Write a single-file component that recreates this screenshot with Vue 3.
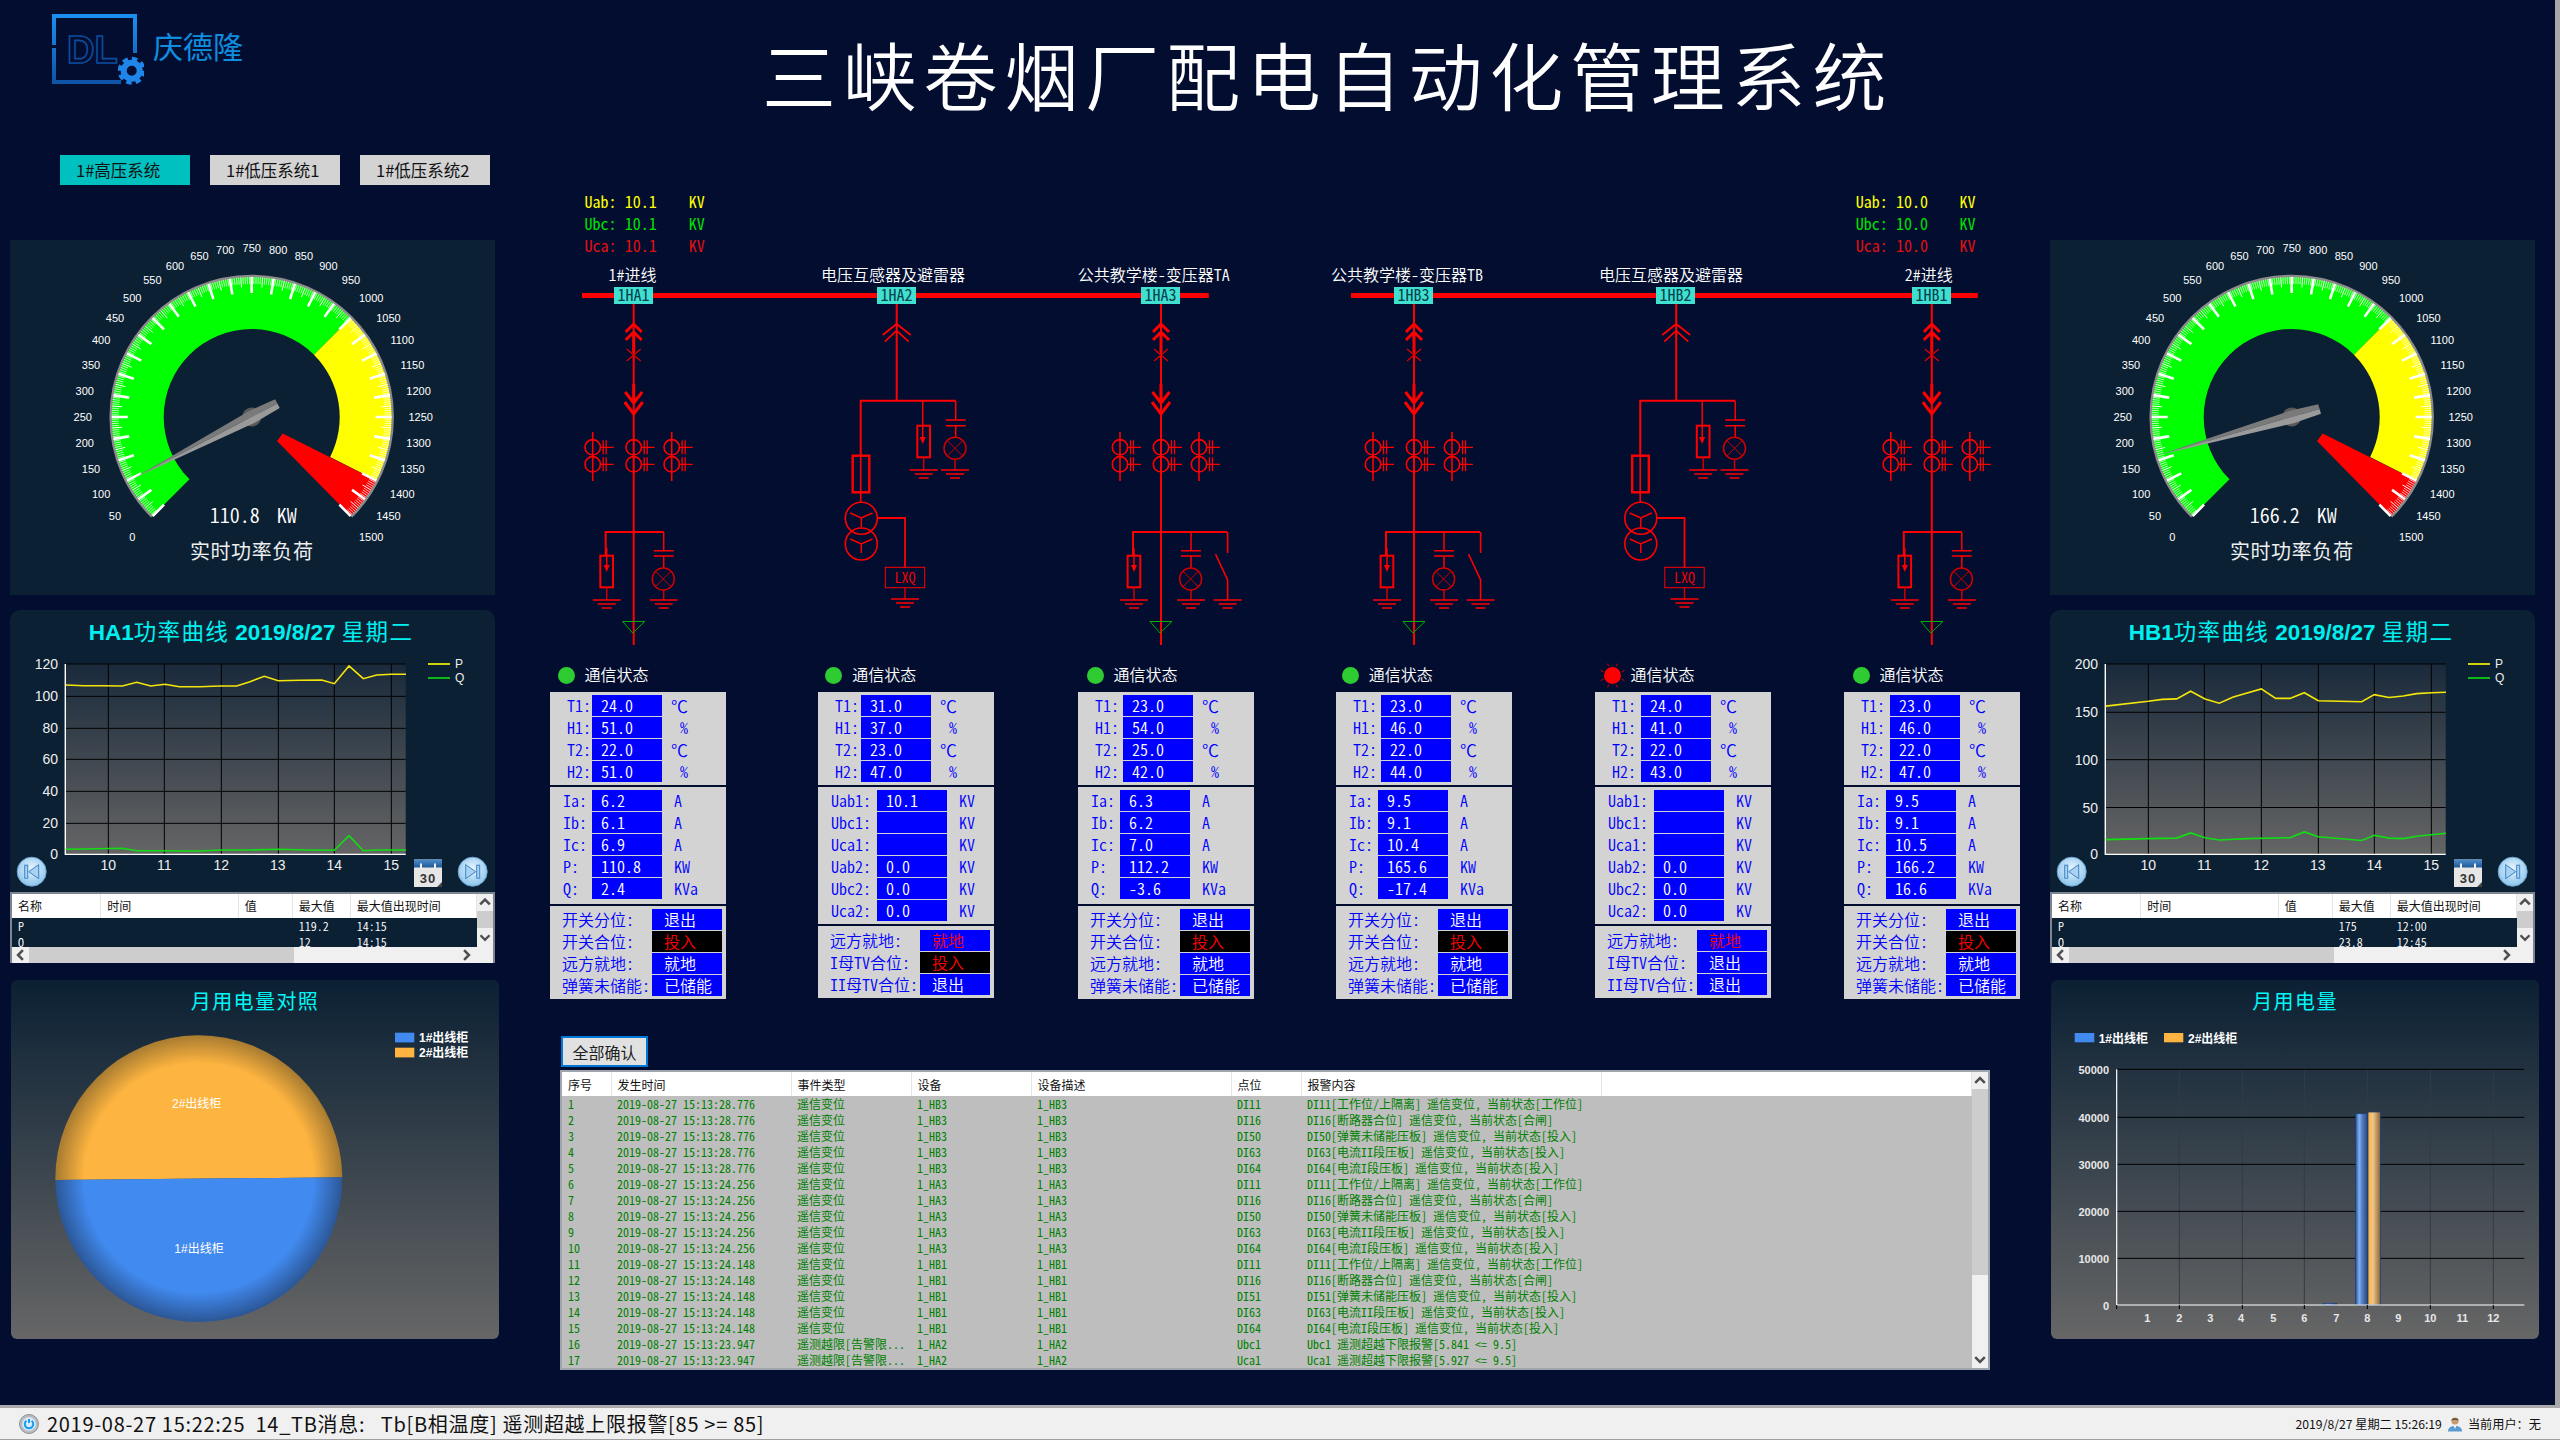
<script setup>
const rad = d => (d * Math.PI) / 180
const pol = (r, a) => [+(r * Math.sin(rad(a))).toFixed(2), +(-r * Math.cos(rad(a))).toFixed(2)]
const ang = v => -135 + (v / 1500) * 270
const band = (ri, ro, a0, a1) => {
  const [x0, y0] = pol(ro, a0), [x1, y1] = pol(ro, a1), [x2, y2] = pol(ri, a1), [x3, y3] = pol(ri, a0)
  return `M${x0} ${y0}A${ro} ${ro} 0 0 1 ${x1} ${y1}L${x2} ${y2}A${ri} ${ri} 0 0 0 ${x3} ${y3}Z`
}
const green = band(88, 141, -135, 45)
const yellow = band(88, 141, 45, 117)
const [rx0, ry0] = pol(141, 117), [rx1, ry1] = pol(141, 135)
const red = `M31 16.6L${rx0} ${ry0}A141 141 0 0 1 ${rx1} ${ry1}L25.3 24Z`
const rim = (() => { const [a, b] = pol(141, -135), [c, d] = pol(141, 135); return `M${a} ${b}A141 141 0 1 1 ${c} ${d}` })()
const tick = (step, skip, len) => {
  let d = ''
  for (let v = 0; v <= 1500; v += step) {
    if (skip && v % skip === 0) continue
    const [a, b] = pol(140, ang(v)), [c, e] = pol(140 - len, ang(v))
    d += `M${a} ${b}L${c} ${e}`
  }
  return d
}
const ticksMinor = tick(5, 25, 7)
const ticksMid = tick(25, 50, 10)
const ticksMajor = tick(50, 0, 16)
const gaugeLabels = Array.from({ length: 31 }, (_, i) => {
  const v = i * 50
  const [x, y] = pol(169, ang(v))
  return { v, x, y: y + 4 }
})
const needle = ([tx, ty]) => {
  const l = Math.hypot(tx, ty), ux = tx / l, uy = ty / l, nx = -uy, ny = ux
  const p = (along, off) => `${(ux * along + nx * off).toFixed(1)},${(uy * along + ny * off).toFixed(1)}`
  return {
    a: [p(l, 0), p(0, 6.5), p(-29, 5), p(-29, 0)].join(' '),
    b: [p(l, 0), p(0, -6.5), p(-29, -5), p(-29, 0)].join(' ')
  }
}
const line = (arr, fx, fy) => arr.map(([x, y]) => `${(fx(x)).toFixed(1)},${(fy(y)).toFixed(1)}`).join(' ')
const fx = z => z / 3 - 10
const yA = z => z / 3 - 52
const yB = z => z / 2.09 - 422
const vLines = [325, 493, 664, 835, 1003, 1174]
const sides = [
  {
    id: 'a', title: 'HA1', value: '110.8',
    n: needle([-118.4, 61.4]),
    grid: [192, 289, 385, 478, 574, 670].map(yA), base: yA(763),
    yl: [['120', 192], ['100', 289], ['80', 385], ['60', 478], ['40', 574], ['20', 670], ['0', 763]].map(([t, z]) => ({ t, y: yA(z) })),
    p: line([[197,255],[253,257],[310,257],[367,258],[410,247],[452,258],[495,253],[538,260],[600,260],[660,258],[710,258],[750,245],[793,229],[835,242],[900,241],[965,240],[1003,251],[1047,198],[1090,236],[1130,225],[1175,223],[1218,223]], fx, yA),
    q: line([[197,748],[253,747],[367,745],[410,752],[495,752],[540,753],[600,753],[665,750],[750,750],[835,748],[920,750],[1003,751],[1047,707],[1090,752],[1130,750],[1218,750]], fx, yA),
    rows: [['P', '119.2', '14:15'], ['Q', '12', '14:15']]
  },
  {
    id: 'b', title: 'HB1', value: '166.2',
    n: needle([-133.4, 38.3]),
    grid: [907, 1008, 1107, 1207].map(yB), base: yB(1305),
    yl: [['200', 907], ['150', 1008], ['100', 1107], ['50', 1207], ['0', 1305]].map(([t, z]) => ({ t, y: yB(z) })),
    p: line([[197,995],[325,985],[367,981],[410,980],[452,964],[495,980],[538,989],[580,976],[664,959],[707,979],[750,979],[793,967],[835,984],[900,985],[965,986],[1003,971],[1047,977],[1090,974],[1130,969],[1175,967],[1218,966]], fx, yB),
    q: line([[197,1274],[325,1272],[410,1271],[452,1260],[495,1270],[538,1275],[620,1272],[750,1270],[793,1258],[835,1268],[965,1276],[1003,1265],[1047,1271],[1090,1272],[1130,1267],[1218,1261]], fx, yB),
    rows: [['P', '175', '12:00'], ['Q', '23.8', '12:45']]
  }
]
const xTicks = [['10', 325], ['11', 493], ['12', 664], ['13', 833], ['14', 1003], ['15', 1174]].map(([t, z]) => ({ t, x: fx(z) }))
const gridV = vLines.map(fx)

const bx = z => z / 3 - 11
const by = z => z / 3 - 42
const barY = [['50000', 268], ['40000', 412], ['30000', 553], ['20000', 694], ['10000', 835]].map(([t, z]) => ({ t, y: by(z) }))
const barX = [322, 418, 511, 603, 700, 793, 889, 982, 1075, 1171, 1267, 1360].map((z, i) => ({ t: i + 1, x: bx(z) }))
const barV = [418, 607, 793, 982, 1171, 1360].map(bx)
const barTicks = [230, 418, 607, 793, 982, 1171, 1360].map(bx)
const bars = [
  { x: bx(850), w: 40 / 3, y: by(970), h: 5 / 3, f: 'blue' },
  { x: bx(947), w: 35 / 3, y: by(401), h: 574 / 3, f: 'blue' },
  { x: bx(984), w: 37 / 3, y: by(396), h: 579 / 3, f: 'orange' }
]

const gnd = (x, y) => `M${x - 14} ${y}H${x + 14}M${x - 9} ${y + 4}H${x + 9}M${x - 5} ${y + 8}H${x + 5}`
const ct = x => {
  let d = ''
  for (const y of [447.3, 464.3]) d += `M${x + 10.5} ${y - 7}V${y + 7}M${x + 13.5} ${y - 7}V${y + 7}M${x + 8} ${y}H${x + 21}`
  return d
}
const ctCols = [-41, 0, 38]
const feeders = [{ x: 633.7 }, { x: 1161, sw: true }, { x: 1414, sw: true }, { x: 1931.8 }]
const vts = [896.7, 1676.2]
const buses = [[582, 1208.8], [1351, 1977.8]]
const tags = [['1HA1', 614], ['1HA2', 877], ['1HA3', 1141], ['1HB3', 1394], ['1HB2', 1656], ['1HB1', 1912]]
const busLabels = [['1#进线', 632.4], ['电压互感器及避雷器', 893], ['公共教学楼-变压器TA', 1153.8], ['公共教学楼-变压器TB', 1407], ['电压互感器及避雷器', 1671], ['2#进线', 1928.8]]
const volts = [
  { x: [584.6, 624.8, 688.7], v: '10.1' },
  { x: [1855.8, 1896, 1959.4], v: '10.0' }
]
const voltRows = [['Uab:', '#ffff00', 207.5], ['Ubc:', '#00e000', 229.5], ['Uca:', '#e01010', 251.5]]

const mk = (m, t, io, bits) => ({ ...m, t, io, bits })
const envLabels = ['T1:', 'H1:', 'T2:', 'H2:']
const envUnits = ['℃', '%', '℃', '%']
const feederIo = v => ['Ia:', 'Ib:', 'Ic:', 'P:', 'Q:'].map((l, i) => ({ l, v: v[i], u: ['A', 'A', 'A', 'KW', 'KVa'][i] }))
const vtIo = v => ['Uab1:', 'Ubc1:', 'Uca1:', 'Uab2:', 'Ubc2:', 'Uca2:'].map((l, i) => ({ l, v: v[i], u: 'KV' }))
const bitsF = [
  { l: '开关分位:', v: '退出' }, { l: '开关合位:', v: '投入', k: 'black' },
  { l: '远方就地:', v: '就地' }, { l: '弹簧未储能:', v: '已储能' }
]
const bitsV = mid => [
  { l: '远方就地:', v: '就地', k: 'redtxt' },
  mid ? { l: 'I母TV合位:', v: '投入', k: 'black' } : { l: 'I母TV合位:', v: '退出' },
  { l: 'II母TV合位:', v: '退出' }
]
const cards = [
  mk({ ml: 0, dot: 7.5, b1: 42, b2: 42, b3: 102 }, ['24.0', '51.0', '22.0', '51.0'], feederIo(['6.2', '6.1', '6.9', '110.8', '2.4']), bitsF),
  mk({ ml: 92, dot: 7.2, b1: 43, b2: 59, b3: 102, vt: true }, ['31.0', '37.0', '23.0', '47.0'], vtIo(['10.1', '', '', '0.0', '0.0', '0.0']), bitsV(true)),
  mk({ ml: 84, dot: 8.5, b1: 45, b2: 42, b3: 102 }, ['23.0', '54.0', '25.0', '42.0'], feederIo(['6.3', '6.2', '7.0', '112.2', '-3.6']), bitsF),
  mk({ ml: 82, dot: 5.7, b1: 45, b2: 42, b3: 102 }, ['23.0', '46.0', '22.0', '44.0'], feederIo(['9.5', '9.1', '10.4', '165.6', '-17.4']), bitsF),
  mk({ ml: 83, dot: 8.5, b1: 46, b2: 59, b3: 102, vt: true, alarm: true }, ['24.0', '41.0', '22.0', '43.0'], vtIo(['', '', '', '0.0', '0.0', '0.0']), bitsV(false)),
  mk({ ml: 73, dot: 8.5, b1: 46, b2: 42, b3: 102 }, ['23.0', '46.0', '22.0', '47.0'], feederIo(['9.5', '9.1', '10.5', '166.2', '16.6']), bitsF)
]
const rays = Array.from({ length: 8 }, (_, i) => {
  const a = pol(10.5, i * 45 + 22.5), b = pol(13.5, i * 45 + 22.5)
  return `M${a[0]} ${a[1]}L${b[0]} ${b[1]}`
}).join('')

const msg = {
  DI11: 'DI11[工作位/上隔离] 遥信变位， 当前状态[工作位]',
  DI16: 'DI16[断路器合位] 遥信变位， 当前状态[合闸]',
  DI50: 'DI50[弹簧未储能压板] 遥信变位， 当前状态[投入]',
  DI51: 'DI51[弹簧未储能压板] 遥信变位， 当前状态[投入]',
  DI63: 'DI63[电流II段压板] 遥信变位， 当前状态[投入]',
  DI64: 'DI64[电流I段压板] 遥信变位， 当前状态[投入]'
}
const alarms = []
for (const [dev, time, pts] of [
  ['1_HB3', '15:13:28.776', ['DI11', 'DI16', 'DI50', 'DI63', 'DI64']],
  ['1_HA3', '15:13:24.256', ['DI11', 'DI16', 'DI50', 'DI63', 'DI64']],
  ['1_HB1', '15:13:24.148', ['DI11', 'DI16', 'DI51', 'DI63', 'DI64']]
]) for (const p of pts) alarms.push({ time: '2019-08-27 ' + time, type: '遥信变位', dev, p, m: msg[p] })
alarms.push({ time: '2019-08-27 15:13:23.947', type: '遥测越限[告警限...', dev: '1_HA2', p: 'Ubc1', m: 'Ubc1 遥测超越下限报警[5.841 <= 9.5]' })
alarms.push({ time: '2019-08-27 15:13:23.947', type: '遥测越限[告警限...', dev: '1_HA2', p: 'Uca1', m: 'Uca1 遥测超越下限报警[5.927 <= 9.5]' })
const alarmCols = ['序号', '发生时间', '事件类型', '设备', '设备描述', '点位', '报警内容', '']
</script>

<template>
  <div class="screen">
    <div class="top">
      <header class="head">
        <div class="logo">
          <svg width="92" height="72" viewBox="0 0 92 72">
            <defs>
              <linearGradient id="lg" x1="0" y1="0" x2="0" y2="1"><stop offset="0" stop-color="#1a8df0" /><stop offset="1" stop-color="#0e55a8" /></linearGradient>
            </defs>
            <path d="M2 31V2H83V39M2 34V68H69" fill="none" stroke="url(#lg)" stroke-width="4" />
            <text x="15" y="49" class="logo-dl">DL</text>
            <circle cx="79.7" cy="56.8" r="8" fill="none" stroke="#1f85e8" stroke-width="6" />
            <circle cx="79.7" cy="56.8" r="12" fill="none" stroke="#1f85e8" stroke-width="4" stroke-dasharray="5.4 4" />
          </svg>
          <span class="logo-name">庆德隆</span>
        </div>
        <h1 class="title">三峡卷烟厂配电自动化管理系统</h1>
      </header>

      <main class="body">
        <section v-for="s in sides" :key="s.id" class="side" :class="'side-' + s.id">
          <nav class="tabs">
            <template v-if="s.id === 'a'">
              <button class="tab on">1#高压系统</button>
              <button class="tab">1#低压系统1</button>
              <button class="tab">1#低压系统2</button>
            </template>
          </nav>

          <div class="gauge-panel">
            <svg width="485" height="355" viewBox="-241.7 -177 485 355">
              <path :d="green" fill="#00ff00" />
              <path :d="yellow" fill="#ffff00" />
              <path :d="red" fill="#ff0000" />
              <path :d="rim" fill="none" stroke="#8a8a8a" stroke-width="2.5" />
              <path :d="ticksMinor" stroke="#fff" stroke-width=".7" />
              <path :d="ticksMid" stroke="#fff" stroke-width="1" />
              <path :d="ticksMajor" stroke="#fff" stroke-width="2.6" />
              <circle cx="0" cy="0" r="9.5" fill="#5a5a5a" />
              <polygon :points="s.n.a" fill="#7a7a7a" />
              <polygon :points="s.n.b" fill="#9a9a9a" />
              <text v-for="l in gaugeLabels" :key="l.v" :x="l.x" :y="l.y" class="g-label">{{ l.v }}</text>
              <text x="-42" y="106" class="g-val sim">{{ s.value }}</text>
              <text x="25" y="106" class="g-val sim">KW</text>
              <text x="0" y="142" class="g-name">实时功率负荷</text>
            </svg>
          </div>

          <div class="chart-panel">
            <h2 class="chart-title"><b>{{ s.title }}</b>功率曲线 <b>2019/8/27</b> 星期二</h2>
            <svg width="485" height="240" viewBox="0 0 485 240" class="chart">
              <defs>
                <linearGradient :id="'plot' + s.id" x1="0" y1="0" x2="0" y2="1"><stop offset="0" stop-color="#1a2a3b" /><stop offset="1" stop-color="#656565" /></linearGradient>
                <radialGradient :id="'btn' + s.id" cx=".5" cy=".4" r=".6"><stop offset="0" stop-color="#e8f5fe" /><stop offset="1" stop-color="#8cc4ec" /></radialGradient>
                <linearGradient :id="'cal' + s.id" x1="0" y1="0" x2="0" y2="1"><stop offset="0" stop-color="#4d8cc8" /><stop offset="1" stop-color="#205a9a" /></linearGradient>
              </defs>
              <rect x="55.3" y="12" width="340.4" :height="s.base - 12" :fill="`url(#plot${s.id})`" />
              <path v-for="y in s.grid" :key="y" :d="`M55.3 ${y}H395.7`" stroke="#000" stroke-width="1" />
              <path v-for="x in gridV" :key="x" :d="`M${x} 12V${s.base}`" stroke="#000" stroke-width="1" />
              <path :d="`M55.3 12V${s.base}H395.7`" fill="none" stroke="#fff" stroke-width="1.4" />
              <polyline :points="s.p" fill="none" stroke="#f5e60a" stroke-width="1.6" />
              <polyline :points="s.q" fill="none" stroke="#10e010" stroke-width="1.6" />
              <text v-for="l in s.yl" :key="l.t" x="48" :y="l.y + 5" class="ax ax-y">{{ l.t }}</text>
              <text v-for="l in xTicks" :key="l.t" :x="l.x" y="218" class="ax ax-x">{{ l.t }}</text>
              <path d="M418 12H440" stroke="#ffff00" stroke-width="1.6" />
              <path d="M418 26H440" stroke="#10e010" stroke-width="1.6" />
              <text x="445" y="16" class="lg">P</text>
              <text x="445" y="30" class="lg">Q</text>
              <g transform="translate(21.7 219.7)">
                <circle r="14.5" :fill="`url(#btn${s.id})`" stroke="#6aa6d0" stroke-width="1" />
                <rect x="-7" y="-6.5" width="3" height="13" fill="#a9d2f2" stroke="#3f86c6" stroke-width="1" />
                <path d="M7 -7V7L-3 0Z" fill="#a9d2f2" stroke="#3f86c6" stroke-width="1" />
              </g>
              <g transform="translate(462.7 219.7)">
                <circle r="14.5" :fill="`url(#btn${s.id})`" stroke="#6aa6d0" stroke-width="1" />
                <rect x="4" y="-6.5" width="3" height="13" fill="#a9d2f2" stroke="#3f86c6" stroke-width="1" />
                <path d="M-7 -7V7L3 0Z" fill="#a9d2f2" stroke="#3f86c6" stroke-width="1" />
              </g>
              <g transform="translate(404 207.5)">
                <rect width="28" height="27.5" fill="#e6e6e6" />
                <rect width="28" height="8" :fill="`url(#cal${s.id})`" />
                <rect x="6" y="4" width="2" height="5" fill="#eee" />
                <rect x="20" y="4" width="2" height="5" fill="#eee" />
                <text x="14" y="23" class="cal">30</text>
                <path d="M23 27.5L28 22.5V27.5Z" fill="#444" />
              </g>
            </svg>
            <div class="mini">
              <div class="mini-main">
                <div class="mini-view">
                  <div class="mini-head">
                    <span>名称</span><span>时间</span><span>值</span><span>最大值</span><span>最大值出现时间</span>
                  </div>
                  <div class="mini-body sim">
                    <div v-for="r in s.rows" :key="r[0]" class="mini-row">
                      <span>{{ r[0] }}</span><span></span><span></span><span>{{ r[1] }}</span><span>{{ r[2] }}</span>
                    </div>
                  </div>
                </div>
                <div class="vbar">
                  <svg class="chev" viewBox="0 0 10 10"><path d="M2 6.5L5 3.5L8 6.5" /></svg>
                  <i class="vthumb"></i>
                  <svg class="chev down" viewBox="0 0 10 10"><path d="M2 6.5L5 3.5L8 6.5" /></svg>
                </div>
              </div>
              <div class="hbar">
                <svg class="chev left" viewBox="0 0 10 10"><path d="M2 6.5L5 3.5L8 6.5" /></svg>
                <i class="hthumb"></i>
                <svg class="chev right" viewBox="0 0 10 10"><path d="M2 6.5L5 3.5L8 6.5" /></svg>
              </div>
            </div>
          </div>

          <div v-if="s.id === 'a'" class="low-panel">
            <h2 class="low-title">月用电量对照</h2>
            <svg width="488" height="317" viewBox="0 0 488 317">
              <defs>
                <radialGradient id="pieO" gradientUnits="userSpaceOnUse" cx="187.8" cy="156" r="143.5"><stop offset=".8" stop-color="#fdb440" /><stop offset="1" stop-color="#a67a30" /></radialGradient>
                <radialGradient id="pieB" gradientUnits="userSpaceOnUse" cx="187.8" cy="156" r="143.5"><stop offset=".8" stop-color="#418aef" /><stop offset="1" stop-color="#2c5797" /></radialGradient>
              </defs>
              <path d="M44.3 158A143.5 143.5 0 0 1 331.3 155.3Z" fill="url(#pieO)" />
              <path d="M331.3 155.3A143.5 143.5 0 0 1 44.3 158Z" fill="url(#pieB)" />
              <text x="185.7" y="86" class="pie-t">2#出线柜</text>
              <text x="188" y="230.5" class="pie-t">1#出线柜</text>
              <rect x="384" y="10.7" width="19.3" height="9.7" fill="#418aef" />
              <rect x="384" y="25.7" width="19.3" height="9.7" fill="#fdb440" />
              <text x="408" y="20" class="pie-lg">1#出线柜</text>
              <text x="408" y="35" class="pie-lg">2#出线柜</text>
            </svg>
          </div>

          <div v-else class="low-panel">
            <h2 class="low-title">月用电量</h2>
            <svg width="488" height="317" viewBox="0 0 488 317">
              <defs>
                <linearGradient id="barB" x1="0" y1="0" x2="1" y2="0"><stop offset="0" stop-color="#2a5396" /><stop offset=".3" stop-color="#80b0f5" /><stop offset=".6" stop-color="#4e79bb" /><stop offset="1" stop-color="#2d4a7c" /></linearGradient>
                <linearGradient id="barO" x1="0" y1="0" x2="1" y2="0"><stop offset="0" stop-color="#fdb440" /><stop offset=".4" stop-color="#f3c486" /><stop offset="1" stop-color="#8a6a3c" /></linearGradient>
              </defs>
              <rect x="23.7" y="11" width="19.6" height="9.3" fill="#418aef" />
              <rect x="113" y="11" width="19.3" height="9.3" fill="#fdb440" />
              <text x="47.7" y="20.5" class="pie-lg">1#出线柜</text>
              <text x="137" y="20.5" class="pie-lg">2#出线柜</text>
              <path v-for="x in barV" :key="x" :d="`M${x} 47.3V283`" stroke="#333b45" stroke-width="1" />
              <path v-for="l in barY" :key="l.t" :d="`M65.7 ${l.y}H473.3`" stroke="#000" stroke-width="1" />
              <rect v-for="b in bars" :key="b.x" :x="b.x" :y="b.y" :width="b.w" :height="b.h" :fill="b.f === 'blue' ? 'url(#barB)' : 'url(#barO)'" stroke="#1f3f78" stroke-width=".8" />
              <path d="M65.7 47.3V283H473.3" fill="none" stroke="#fff" stroke-width="1.2" />
              <path v-for="x in barTicks" :key="x" :d="`M${x} 283v4`" stroke="#000" stroke-width="1" />
              <text v-for="l in barY" :key="l.t" x="58" :y="l.y + 5" class="bar-ax ax-y">{{ l.t }}</text>
              <text x="58" y="288" class="bar-ax ax-y">0</text>
              <text v-for="l in barX" :key="l.t" :x="l.x" y="300" class="bar-ax ax-x">{{ l.t }}</text>
            </svg>
          </div>
        </section>

        <section class="center">
          <svg class="diagram" width="1500" height="484" viewBox="540 180 1500 484">
            <g v-for="(g, gi) in volts" :key="gi">
              <g v-for="r in voltRows" :key="r[0]" :fill="r[1]" class="sim v-txt">
                <text :x="g.x[0]" :y="r[2]">{{ r[0] }}</text>
                <text :x="g.x[1]" :y="r[2]">{{ g.v }}</text>
                <text :x="g.x[2]" :y="r[2]">KV</text>
              </g>
            </g>
            <text v-for="l in busLabels" :key="l[1]" :x="l[1]" y="281" class="bus-l sim">{{ l[0] }}</text>
            <rect v-for="b in buses" :key="b[0]" :x="b[0]" y="293" :width="b[1] - b[0]" height="5" fill="#ff0000" />

            <g v-for="f in feeders" :key="f.x" :transform="`translate(${f.x} 0)`" fill="none" stroke="#ff0000">
              <path d="M0 304V645" stroke-width="2" />
              <path d="M-8 332L0 324L8 332M-8 340L0 332L8 340M0 332V352" stroke-width="3" />
              <path d="M-7 349L7 361M7 349L-7 361" stroke-width="1.3" stroke="#e00000" />
              <path d="M0 384V402M-8.5 392L0 403L8.5 392M-9 402L0 414L9 402" stroke-width="3" />
              <g v-for="c in ctCols" :key="c">
                <path v-if="c" :d="`M${c} 432V481`" stroke-width="1.6" />
                <circle :cx="c" cy="447.3" r="7.7" stroke-width="1.6" />
                <circle :cx="c" cy="464.3" r="7.7" stroke-width="1.6" />
                <path :d="ct(c)" stroke-width="1.3" />
              </g>
              <path :d="`M-28 556V532H${f.sw ? 66 : 30}`" stroke-width="2" />
              <rect x="-33.4" y="555.7" width="12.7" height="31.6" stroke-width="2" />
              <path d="M-27 548V568" stroke-width="1.5" />
              <path d="M-30 565L-27 572L-24 565Z" fill="#ff0000" stroke="none" />
              <path d="M-27 587V600" stroke-width="1.5" stroke="#d00000" />
              <path :d="gnd(-27, 600)" stroke-width="1.6" />
              <path d="M30 532V550.7M20 550.7H40M20 556H40M30 556V568" stroke-width="1.5" />
              <circle cx="29.6" cy="579" r="11" stroke-width="1.5" stroke="#d00000" />
              <path d="M21.8 571.2L37.4 586.8M37.4 571.2L21.8 586.8" stroke-width="1" stroke="#d00000" />
              <path d="M30 590V600" stroke-width="1.5" stroke="#d00000" />
              <path :d="gnd(30, 600)" stroke-width="1.6" />
              <g v-if="f.sw">
                <path d="M66.6 532V553M54.5 554L66.6 580V600" stroke-width="1.6" />
                <path :d="gnd(66.6, 600)" stroke-width="1.6" />
              </g>
              <path d="M-11 621.5H11L-1 633Z" stroke="#00b000" stroke-width="1" />
            </g>

            <g v-for="x0 in vts" :key="x0" :transform="`translate(${x0} 0)`" fill="none" stroke="#ff0000">
              <path d="M0 304V400.7" stroke-width="2" />
              <path d="M-14 335L0 324L14 335M-12 341.7L0 330.7L12 341.7" stroke-width="1.8" />
              <path d="M-36 456V400.7H59" stroke-width="2" />
              <rect x="-44" y="455.7" width="16.6" height="36.6" stroke-width="2.4" />
              <path d="M-36 456V503" stroke-width="1.6" />
              <circle cx="-35.4" cy="518.3" r="16" stroke-width="1.6" />
              <circle cx="-35.4" cy="544" r="16" stroke-width="1.6" />
              <path d="M-46.5 513L-35.4 518L-24.3 513M-35.4 518V527M-46.5 539L-35.4 544L-24.3 539M-35.4 544V553" stroke-width="1.5" />
              <path d="M-19 518H8.3V567.3" stroke-width="1.8" />
              <rect x="-11.4" y="567.3" width="39.4" height="20.4" stroke-width="1" />
              <text x="8.3" y="583" class="lxq sim">LXQ</text>
              <path d="M8.3 587.7V599" stroke-width="1.5" stroke="#d00000" />
              <path :d="gnd(8.3, 599)" stroke-width="1.6" />
              <path d="M26 400.7V439" stroke-width="1.5" />
              <path d="M23 437L26 444L29 437Z" fill="#ff0000" stroke="none" />
              <rect x="20.6" y="425.7" width="12.7" height="31.6" stroke-width="2" />
              <path d="M27 457V470" stroke-width="1.5" stroke="#d00000" />
              <path :d="gnd(27, 470)" stroke-width="1.6" />
              <path d="M59 400.7V420M49 420H69M49 425.7H69M59 425.7V437" stroke-width="1.5" />
              <circle cx="58.3" cy="448.3" r="11" stroke-width="1.5" stroke="#d00000" />
              <path d="M50.5 440.5L66.1 456.1M66.1 440.5L50.5 456.1" stroke-width="1" stroke="#d00000" />
              <path d="M58.3 459.3V470" stroke-width="1.5" stroke="#d00000" />
              <path :d="gnd(58.3, 470)" stroke-width="1.6" />
            </g>

            <g v-for="t in tags" :key="t[0]">
              <rect :x="t[1]" y="287" width="39" height="17" fill="#40e0d0" />
              <text :x="t[1] + 19.5" y="301" class="tag sim">{{ t[0] }}</text>
            </g>
          </svg>

          <div class="cards sim">
            <article v-for="c in cards" :key="c.ml" class="card" :style="{ marginLeft: c.ml + 'px' }">
              <div class="status">
                <span class="dot-wrap" :style="{ marginLeft: c.dot + 'px' }">
                  <svg v-if="c.alarm" class="dot-svg" width="17" height="17" viewBox="-8.5 -8.5 17 17">
                    <circle r="8.5" fill="#ff0000" />
                    <g transform="scale(.95)"><path :d="rays" stroke="#e00000" stroke-width="1" /></g>
                  </svg>
                  <i v-else class="dot"></i>
                </span>
                <span class="status-t">通信状态</span>
              </div>
              <div class="pane">
                <div class="rows p1" :style="{ gridTemplateColumns: c.b1 + 'px 70px 1fr' }">
                  <template v-for="(v, i) in c.t" :key="i">
                    <span class="lab">{{ envLabels[i] }}</span>
                    <span class="val">{{ v }}</span>
                    <span class="unit" :class="envUnits[i] === '%' ? 'pct' : 'deg'">{{ envUnits[i] }}</span>
                  </template>
                </div>
              </div>
              <div class="pane">
                <div class="rows p2" :class="{ six: c.vt }" :style="{ gridTemplateColumns: c.b2 + 'px 70px 1fr' }">
                  <template v-for="r in c.io" :key="r.l">
                    <span class="lab">{{ r.l }}</span>
                    <span class="val">{{ r.v }}</span>
                    <span class="unit u2">{{ r.u }}</span>
                  </template>
                </div>
              </div>
              <div class="pane">
                <div class="rows p3" :class="{ three: c.vt }" :style="{ gridTemplateColumns: c.b3 + 'px 70px' }">
                  <template v-for="r in c.bits" :key="r.l">
                    <span class="lab">{{ r.l }}</span>
                    <span class="val v3" :class="r.k">{{ r.v }}</span>
                  </template>
                </div>
              </div>
            </article>
          </div>

          <button class="confirm">全部确认</button>

          <div class="alarm">
            <div class="alarm-view">
              <table class="alarm-table sim">
                <colgroup>
                  <col style="width:49px" /><col style="width:180px" /><col style="width:120px" /><col style="width:120px" /><col style="width:200px" /><col style="width:70px" /><col style="width:300px" /><col />
                </colgroup>
                <thead>
                  <tr><th v-for="(h, i) in alarmCols" :key="i">{{ h }}</th></tr>
                </thead>
                <tbody>
                  <tr v-for="(a, i) in alarms" :key="i">
                    <td>{{ i + 1 }}</td><td>{{ a.time }}</td><td>{{ a.type }}</td><td>{{ a.dev }}</td><td>{{ a.dev }}</td><td>{{ a.p }}</td><td colspan="2">{{ a.m }}</td>
                  </tr>
                </tbody>
              </table>
            </div>
            <div class="alarm-bar">
              <svg class="chev" viewBox="0 0 10 10"><path d="M2 6.5L5 3.5L8 6.5" /></svg>
              <i class="alarm-thumb"></i>
              <svg class="chev down" viewBox="0 0 10 10"><path d="M2 6.5L5 3.5L8 6.5" /></svg>
            </div>
          </div>
        </section>
      </main>
    </div>

    <footer class="foot">
      <div class="foot-l">
        <svg width="20" height="20" viewBox="-10 -10 20 20">
          <circle r="9.5" fill="#b8bcc0" stroke="#8d9196" />
          <circle r="6.8" fill="#d6ecfa" />
          <path d="M-2.6 -3.2A4.2 4.2 0 1 0 2.6 -3.2" fill="none" stroke="#1a9cf0" stroke-width="2" />
          <path d="M0 -5V-1" stroke="#1a9cf0" stroke-width="2" />
        </svg>
        <span class="foot-msg">2019-08-27 15:22:25&nbsp; 14_TB消息:&nbsp;&nbsp; Tb[B相温度] 遥测超越上限报警[85 &gt;= 85]</span>
      </div>
      <div class="foot-r">
        <span>2019/8/27 星期二 15:26:19</span>
        <svg width="16" height="16" viewBox="0 0 16 16">
          <path d="M1 15.5C1 11.5 4 10 8 10S15 11.5 15 15.5Z" fill="#5b9ad0" />
          <circle cx="8" cy="5" r="3.6" fill="#c89a70" />
          <path d="M4.4 4.6C4.6 1.4 11.4 1.4 11.6 4.6C9.8 3.4 6.2 3.4 4.4 4.6Z" fill="#5a4434" />
          <path d="M6.8 10H9.2L8 13Z" fill="#fff" />
        </svg>
        <span>当前用户：无</span>
      </div>
    </footer>
  </div>
</template>

<style scoped>
.screen { width: 2560px; height: 1440px; display: flex; flex-direction: column; background: #020d30; overflow: hidden; font-family: "Noto Sans CJK SC", "Liberation Sans", sans-serif; color: #fff; }
.sim { font-family: "Noto Sans CJK SC", sans-serif; font-feature-settings: "hwid" 1; font-weight: 350; }
.top { flex: 1; min-height: 0; border-right: 5px solid #a8a8a8; }

.head { height: 155px; display: flex; }
.logo { width: 540px; box-sizing: border-box; padding: 14px 0 0 52px; display: flex; align-items: flex-start; gap: 9px; }
.logo-dl { font: 700 38px "Liberation Sans", sans-serif; fill: none; stroke: #0c4c9c; stroke-width: 1.6; }
.logo-name { font-size: 30px; line-height: 30px; margin-top: 16px; letter-spacing: 0; color: #0f8ee0; }
.title { margin: 0 0 0 222px; font-weight: 350; font-size: 74px; letter-spacing: 6.8px; line-height: 145px; height: 155px; white-space: nowrap; }

.body { display: grid; grid-template-columns: 540px 1500px 515px; }
.side { grid-row: 1; box-sizing: border-box; padding-left: 10px; }
.side-a { grid-column: 1; }
.side-b { grid-column: 3; }
.center { grid-column: 2; grid-row: 1; padding-top: 25px; }

.tabs { height: 30px; margin-bottom: 55px; margin-left: 50px; display: flex; gap: 20px; }
.tab { width: 130px; height: 30px; border: 0; padding: 0 0 0 16px; text-align: left; background: #d3d3d3; color: #111; font: 400 16.5px "Noto Sans CJK SC", sans-serif; }
.tab.on { background: #00c0c0; }

.gauge-panel { width: 485px; height: 355px; background: #0b2033; }
.gauge-panel svg { display: block; }
.g-label { font: 11px "Liberation Sans", sans-serif; fill: #fff; text-anchor: middle; }
.g-val { font-size: 20px; fill: #fff; }
.g-name { font-size: 20px; letter-spacing: .6px; fill: #eee; text-anchor: middle; }

.chart-panel { width: 485px; height: 353px; margin-top: 15px; background: #0b2033; border-radius: 10px 10px 0 0; display: flex; flex-direction: column; }
.chart-title { margin: 0; height: 42px; line-height: 40px; padding-right: 3px; text-align: center; font-size: 22.5px; letter-spacing: 1.3px; font-weight: 400; color: #00f0f0; white-space: nowrap; }
.chart-title b { font-family: "Liberation Sans", sans-serif; letter-spacing: 0; }
.chart { display: block; flex: none; }
.ax { font: 14px "Liberation Sans", sans-serif; fill: #eee; }
.ax-y { text-anchor: end; }
.ax-x { text-anchor: middle; }
.lg { font: 12px "Liberation Sans", sans-serif; fill: #eee; }
.cal { font: 700 13px "Liberation Sans", sans-serif; fill: #333; text-anchor: middle; letter-spacing: 1px; }

.mini { height: 71px; box-sizing: border-box; border: solid #7d8590; border-width: 2px 2px 0; display: flex; flex-direction: column; }
.mini-main { flex: 1; min-height: 0; display: flex; }
.mini-view { flex: 1; overflow: hidden; }
.mini-head, .mini-row { display: grid; grid-template-columns: 89.3px 137.4px 54px 58px 1fr; font-size: 12px; }
.mini-head { height: 24px; background: #fff; color: #111; line-height: 24px; }
.mini-head span { padding-left: 6px; border-right: 1px solid #e5e5e5; }
.mini-body { height: 29px; overflow: hidden; background: #0b2033; }
.mini-row { height: 16px; line-height: 16px; color: #fff; }
.mini-row span { padding-left: 6px; }
.vbar { width: 16px; background: #f0f0f0; display: flex; flex-direction: column; align-items: center; }
.vbar .chev { width: 16px; height: 16px; flex: none; }
.vthumb { width: 16px; height: 17px; background: #cdcdcd; margin-top: 1px; }
.vbar .chev.down { margin-top: 2px; height: 15px; }
.hbar { height: 16px; flex: none; background: #f0f0f0; display: flex; align-items: center; }
.hbar .chev { width: 17px; height: 16px; flex: none; }
.hthumb { width: 265px; height: 16px; background: #cdcdcd; }
.hbar .chev.right { margin-left: auto; margin-right: 18px; }
.chev path { fill: none; stroke: #505050; stroke-width: 1.6; }
.chev.down { transform: rotate(180deg); }
.chev.left { transform: rotate(-90deg); }
.chev.right { transform: rotate(90deg); }

.low-panel { width: 488px; height: 359px; margin: 17px 0 0 1px; border-radius: 6px; background: linear-gradient(#0b2033, #666); }
.low-panel svg { display: block; }
.low-title { margin: 0; height: 42px; line-height: 42px; text-align: center; font-size: 20px; letter-spacing: 1.4px; font-weight: 400; color: #00f8f8; }
.pie-t { font: 12px "Liberation Sans", "Noto Sans CJK SC", sans-serif; fill: #fff; text-anchor: middle; }
.pie-lg { font: 700 12px "Liberation Sans", "Noto Sans CJK SC", sans-serif; fill: #fff; }
.bar-ax { font: 700 11px "Liberation Sans", sans-serif; fill: #e8e8e8; }

.diagram { display: block; }
.v-txt { font-size: 16px; font-weight: 400; }
.bus-l { font-size: 16px; fill: #fff; text-anchor: middle; }
.tag { font-size: 16px; font-weight: 400; fill: #06404c; stroke: none; text-anchor: middle; }
.lxq { font-size: 14px; fill: #ff0000; stroke: none; text-anchor: middle; }

.cards { display: flex; align-items: flex-start; padding-left: 10px; height: 335px; }
.card { width: 176px; flex: none; display: flex; flex-direction: column; gap: 2px; }
.status { height: 22px; margin-bottom: 4px; display: flex; align-items: center; gap: 10px; }
.dot-wrap { width: 17px; height: 17px; flex: none; }
.dot { display: block; width: 17px; height: 17px; border-radius: 50%; background: #2ecc32; }
.dot-svg { display: block; overflow: visible; }
.status-t { font-size: 16px; color: #fff; margin-top: -2px; }
.pane { background: #d3d3d3; }
.rows { display: grid; row-gap: 1px; grid-auto-rows: 21px; padding: 3px 0; font-size: 16px; line-height: 21px; color: #0000ff; }
.rows.p2 { padding-bottom: 5px; }
.rows.p2.six { padding-bottom: 3px; }
.rows.p3.three { padding-top: 4px; }
.lab { white-space: nowrap; }
.p1 .lab { padding-left: 17px; }
.p2 .lab { padding-left: 13px; }
.p3 .lab { padding-left: 12px; }
.val { background: #0000ff; color: #fff; padding-left: 9px; white-space: nowrap; }
.val.v3 { padding-left: 12px; }
.val.black { background: #000; color: #ff0000; }
.val.redtxt { color: #ff0000; }
.unit { padding-left: 10px; white-space: nowrap; }
.unit.deg { font-feature-settings: normal; font-size: 17px; padding-left: 9px; }
.unit.pct { padding-left: 18px; }
.unit.u2 { padding-left: 12px; }

.confirm { display: block; width: 87px; height: 31px; margin: 37px 0 3px 21px; box-sizing: border-box; border: 2px solid #0078d7; background: #e1e1e1; color: #222; padding: 0; font: 400 16px "Noto Sans CJK SC", sans-serif; }
.alarm { width: 1430px; height: 300px; margin-left: 20px; box-sizing: border-box; border: 2px solid #a0a4ac; display: flex; }
.alarm-view { flex: 1; min-width: 0; overflow: hidden; background: #bebebe; }
.alarm-table { width: 1410px; table-layout: fixed; border-collapse: collapse; font-size: 12px; font-weight: 400; }
.alarm-table th { height: 24px; padding: 0 0 0 6px; background: #fff; color: #111; font-weight: 400; text-align: left; border-right: 1px solid #e5e5e5; }
.alarm-table td { height: 16px; padding: 0 0 0 6px; color: #008000; line-height: 16px; white-space: nowrap; overflow: hidden; }
.alarm-bar { width: 16px; flex: none; background: #f0f0f0; display: flex; flex-direction: column; }
.alarm-bar .chev { width: 16px; height: 17px; flex: none; }
.alarm-thumb { width: 16px; height: 186px; background: #cdcdcd; }
.alarm-bar .chev.down { margin-top: auto; }

.foot { height: 35px; flex: none; box-sizing: border-box; border-top: 3px solid #aaa; border-bottom: 1px solid #a0a0a0; background: #f0f0f0; color: #111; display: flex; justify-content: space-between; align-items: center; padding: 0 19px; }
.foot-l { display: flex; align-items: center; gap: 8px; }
.foot-msg { font-size: 20px; letter-spacing: .7px; white-space: nowrap; }
.foot-r { display: flex; align-items: center; gap: 5px; font-size: 12.2px; }
</style>

<style>
html, body { margin: 0; background: #020d30; }
</style>
